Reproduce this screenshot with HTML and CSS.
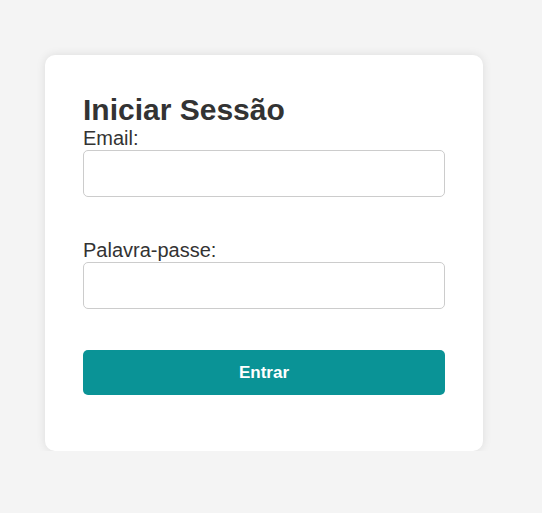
FILE: index.html
```html
<!DOCTYPE html>
<html lang="pt">
<head>
<meta charset="utf-8">
<title>Iniciar Sessão</title>
<link rel="stylesheet" href="styles.css">
</head>
<body>
<main class="page">
  <form class="card">
    <h2 class="title">Iniciar Sessão</h2>
    <label class="label" for="email">Email:</label>
    <input class="field" id="email" type="email">
    <label class="label" for="pass">Palavra-passe:</label>
    <input class="field field-last" id="pass" type="password">
    <button class="btn" type="button">Entrar</button>
  </form>
</main>
</body>
</html>
```
FILE: styles.css
```css
html, body {
  margin: 0;
  padding: 0;
}
body {
  background: #f4f4f4;
  font-family: "Liberation Sans", Arial, sans-serif;
  color: #333;
}
.page {
  padding: 55px 0 0 45px;
}
.card {
  box-sizing: border-box;
  width: 438px;
  height: 396px;
  background: #fff;
  border-radius: 10px;
  box-shadow: 0 0 10px rgba(0, 0, 0, 0.1);
  padding: 38px 38px;
  display: flex;
  flex-direction: column;
}
.title {
  margin: 0;
  font-size: 30px;
  font-weight: bold;
  line-height: 34px;
}
.label {
  display: block;
  font-size: 20px;
  line-height: 23px;
}
.field {
  box-sizing: border-box;
  height: 47px;
  width: 100%;
  border: 1px solid #ccc;
  border-radius: 5px;
  margin: 0 0 42px;
  font-size: 16px;
}
.field-last {
  margin-bottom: 41px;
}
.btn {
  height: 45px;
  border: none;
  border-radius: 5px;
  background: #0a9396;
  color: #fff;
  font-family: "Liberation Sans", Arial, sans-serif;
  font-size: 17px;
  font-weight: bold;
}
```
